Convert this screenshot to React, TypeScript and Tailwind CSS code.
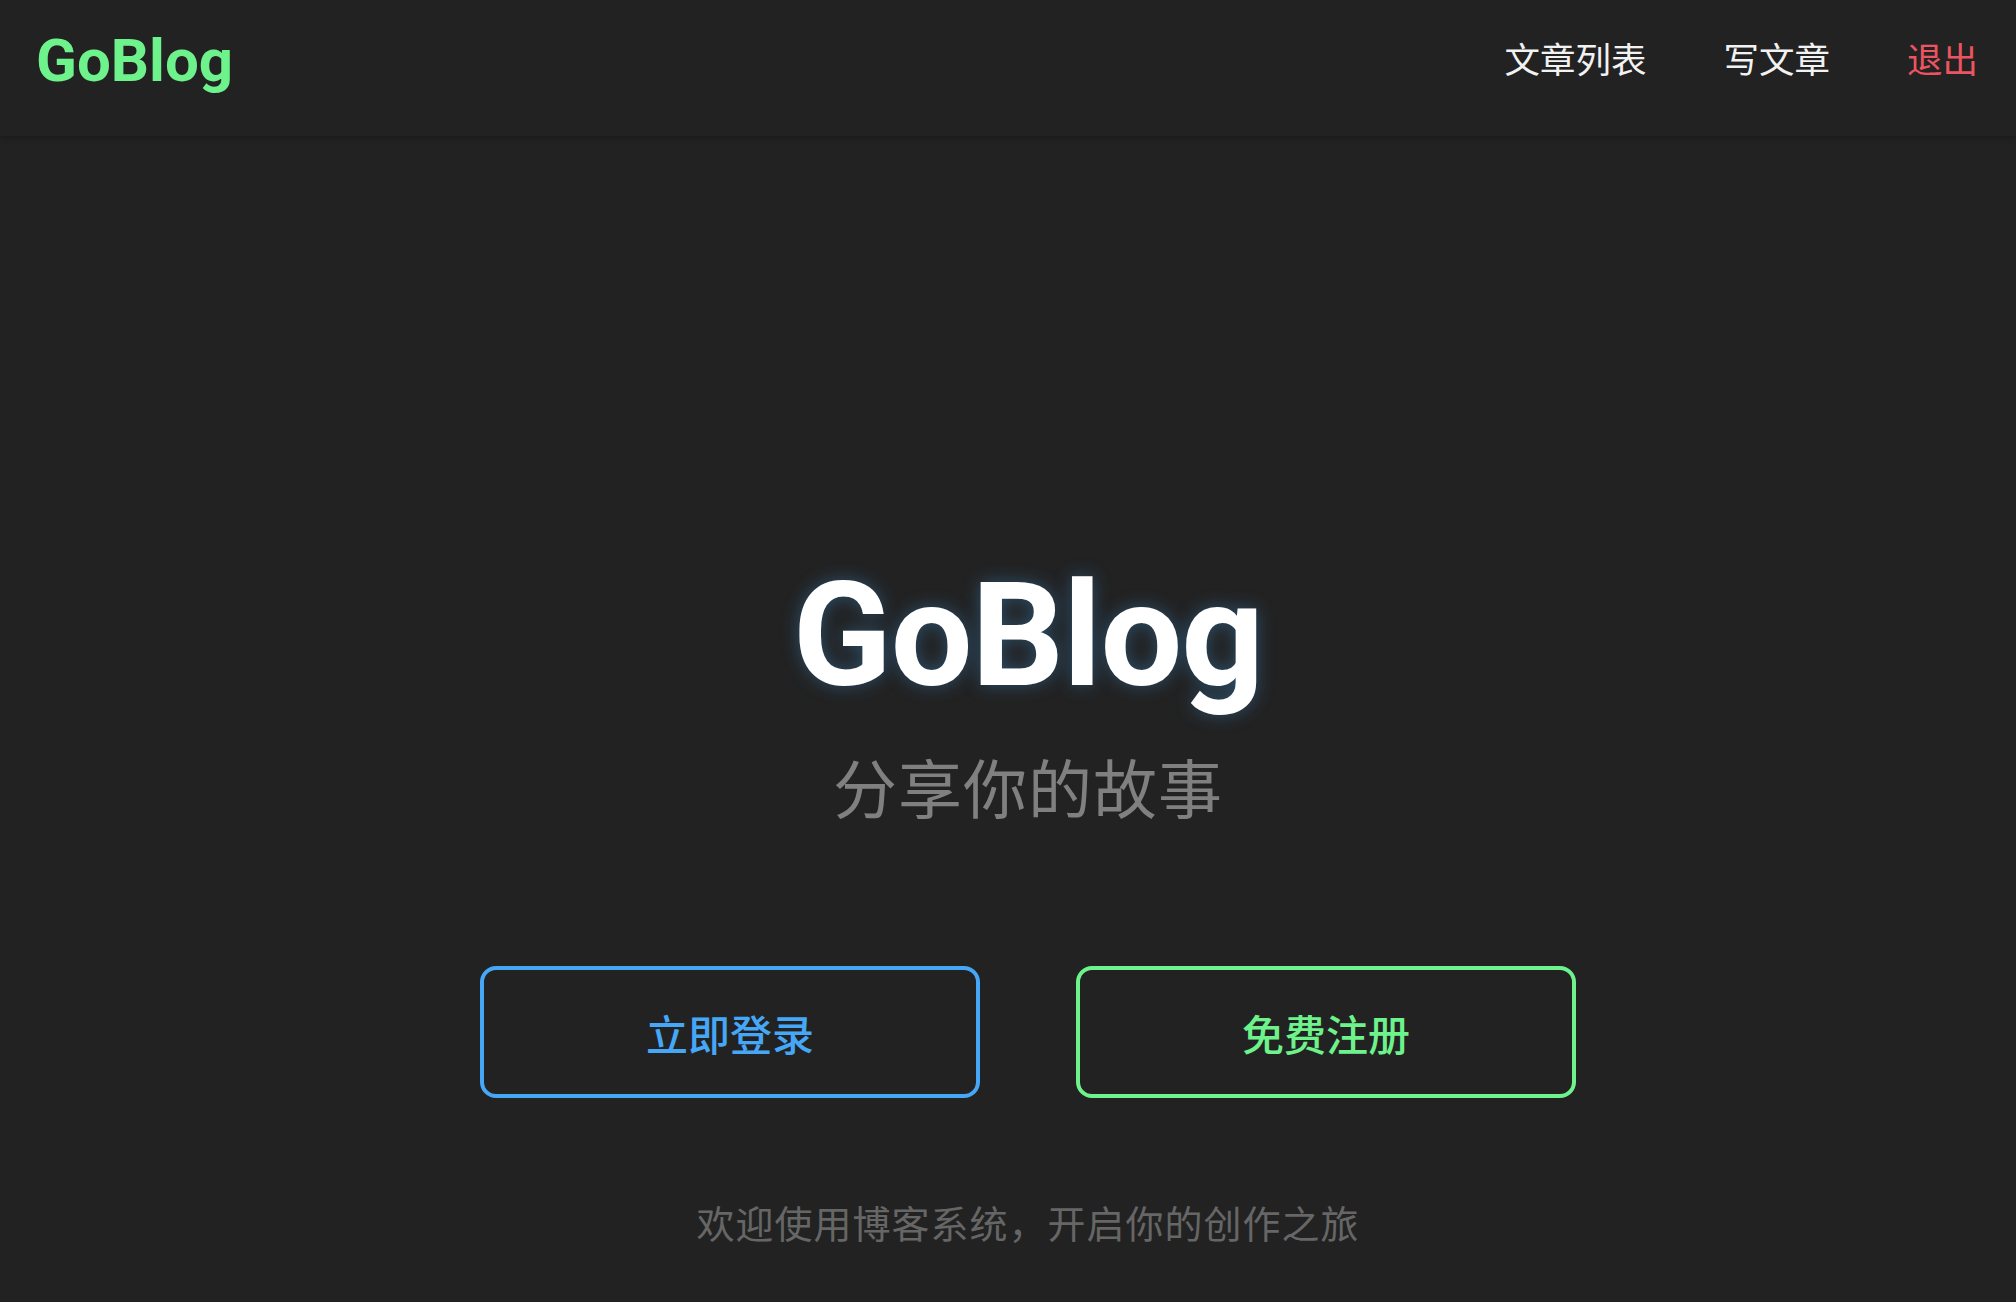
import React from "react";

export default function App() {
  const cjk = '"Noto Sans CJK SC", "Noto Sans", sans-serif';
  return (
    <div className="min-h-[1302px] w-full bg-[#222222] flex flex-col" style={{ fontFamily: cjk }}>
      <header className="h-[136px] bg-[#222222] shadow-[0_2px_6px_rgba(0,0,0,0.25)] flex items-center justify-between pl-[36px] pr-[38px] relative z-10">
        <div
          className="text-[60px] font-bold text-[#6ef28c] leading-none -mt-[14px]"
          style={{ fontFamily: 'Roboto, "Liberation Sans", sans-serif' }}
        >
          GoBlog
        </div>
        <nav className="flex items-center gap-[77px] text-[35.5px] leading-none -mt-[20px]">
          <a className="text-[#f2f2f2]">文章列表</a>
          <a className="text-[#f2f2f2]">写文章</a>
          <a className="text-[#ec5461]">退出</a>
        </nav>
      </header>
      <main className="flex-1 flex flex-col items-center pt-[427px] pl-[40px]">
        <h1
          className="text-[145px] font-bold leading-none text-white tracking-[-1px]"
          style={{
            fontFamily: 'Roboto, "Liberation Sans", sans-serif',
            textShadow: "0 0 18px rgba(66,165,245,0.35)",
          }}
        >
          GoBlog
        </h1>
        <p className="mt-[45px] text-[64px] leading-none text-[#808080] tracking-[1px]">分享你的故事</p>
        <div className="mt-[149px] flex gap-[96px]">
          <button className="w-[500px] h-[132px] rounded-[16px] border-4 border-[#45a7f5] text-[#45a7f5] text-[42px] font-medium flex items-center justify-center">
            立即登录
          </button>
          <button className="w-[500px] h-[132px] rounded-[16px] border-4 border-[#6ef28c] text-[#6ef28c] text-[42px] font-medium flex items-center justify-center">
            免费注册
          </button>
        </div>
        <p className="mt-[105px] text-[38px] leading-none text-[#666666] tracking-[1px]">
          欢迎使用博客系统，开启你的创作之旅
        </p>
      </main>
    </div>
  );
}
